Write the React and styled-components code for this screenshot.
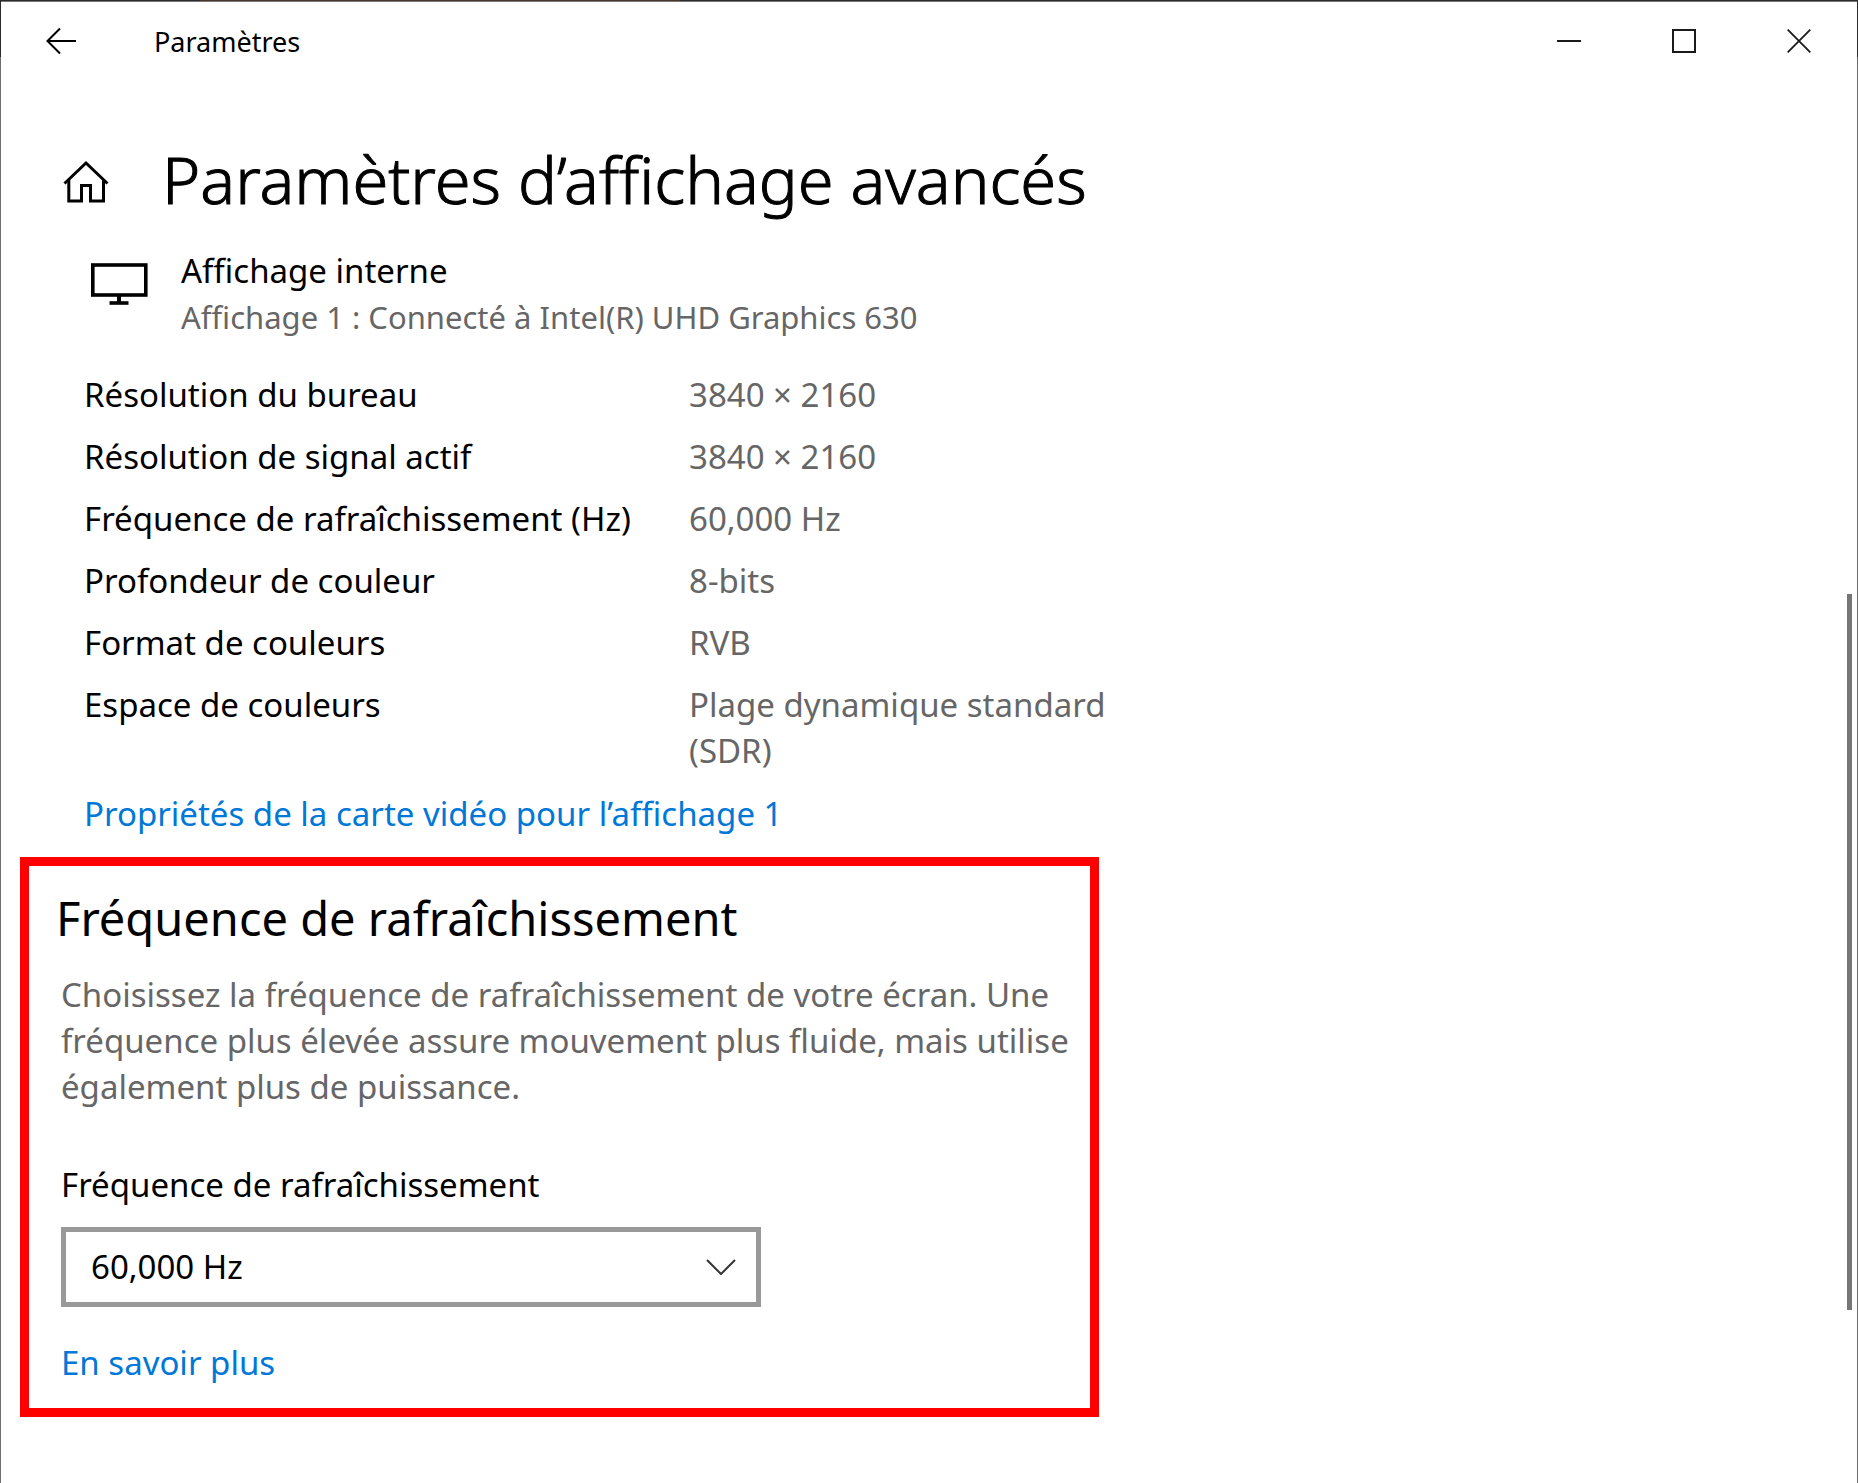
import React, { useState } from 'react';
import styled, { createGlobalStyle } from 'styled-components';

const displayInfo = [
  { label: 'Résolution du bureau', value: '3840 × 2160' },
  { label: 'Résolution de signal actif', value: '3840 × 2160' },
  { label: 'Fréquence de rafraîchissement (Hz)', value: '60,000 Hz' },
  { label: 'Profondeur de couleur', value: '8-bits' },
  { label: 'Format de couleurs', value: 'RVB' },
  { label: 'Espace de couleurs', value: 'Plage dynamique standard (SDR)' },
];

const refreshRates = ['60,000 Hz', '59,940 Hz', '48,000 Hz'];

const App = () => {
  const [rate, setRate] = useState(refreshRates[0]);

  return (
    <Desktop>
      <GlobalStyle />
      <Window>
        <TitleBar>
          <BackButton aria-label="Retour">
            <svg width="32" height="28" viewBox="0 0 32 28" fill="none" stroke="#000" strokeWidth="2">
              <path d="M2.5 14H31M15 1.5L2.5 14 15 26.5" />
            </svg>
          </BackButton>
          <WindowTitle>Paramètres</WindowTitle>
          <BarButton aria-label="Réduire">
            <svg width="24" height="24" viewBox="0 0 24 24" fill="none" stroke="#1a1a1a" strokeWidth="2">
              <path d="M0 12h24" />
            </svg>
          </BarButton>
          <BarButton aria-label="Agrandir">
            <svg width="24" height="24" viewBox="0 0 24 24" fill="none" stroke="#1a1a1a" strokeWidth="2">
              <rect x="1" y="1" width="22" height="22" />
            </svg>
          </BarButton>
          <BarButton aria-label="Fermer">
            <svg width="24" height="24" viewBox="0 0 24 24" fill="none" stroke="#1a1a1a" strokeWidth="1.8">
              <path d="M.7.7l22.6 22.6M23.3.7L.7 23.3" />
            </svg>
          </BarButton>
        </TitleBar>

        <Header>
          <HomeButton aria-label="Accueil">
            <svg width="48" height="48" viewBox="0 0 48 48" fill="none" stroke="#000" strokeWidth="3">
              <path d="M1.5 28.5L23 8l21.5 20.5" />
              <path d="M5.8 25v21h12.7V30.5h9V46h13V25" />
            </svg>
          </HomeButton>
          <PageTitle>Paramètres d’affichage avancés</PageTitle>
        </Header>

        <Content>
          <Device>
            <MonitorIcon viewBox="0 0 58 42" fill="none" stroke="#000">
              <rect x="2.8" y="2" width="53" height="30" strokeWidth="3.6" />
              <path d="M29 33v6" strokeWidth="4" />
              <path d="M19.5 40h19" strokeWidth="3.6" />
            </MonitorIcon>
            <div>
              <DeviceName>Affichage interne</DeviceName>
              <DeviceDetail>Affichage 1 : Connecté à Intel(R) UHD Graphics 630</DeviceDetail>
            </div>
          </Device>

          <InfoTable>
            <tbody>
              {displayInfo.map((item) => (
                <tr key={item.label}>
                  <InfoLabel scope="row">{item.label}</InfoLabel>
                  <InfoValue>{item.value}</InfoValue>
                </tr>
              ))}
            </tbody>
          </InfoTable>
          <AdapterLink>
            <Link href="#adapter">Propriétés de la carte vidéo pour l’affichage 1</Link>
          </AdapterLink>

          <Highlight>
            <SectionTitle>Fréquence de rafraîchissement</SectionTitle>
            <SectionBody>
              <Hint>
                Choisissez la fréquence de rafraîchissement de votre écran. Une fréquence plus
                élevée assure mouvement plus fluide, mais utilise également plus de puissance.
              </Hint>
              <FieldLabel htmlFor="rate">Fréquence de rafraîchissement</FieldLabel>
              <SelectWrap>
                <Select id="rate" value={rate} onChange={(e) => setRate(e.target.value)}>
                  {refreshRates.map((r) => (
                    <option key={r}>{r}</option>
                  ))}
                </Select>
                <Chevron viewBox="0 0 30 16" fill="none" stroke="#333" strokeWidth="2">
                  <path d="M1 1l14 14L29 1" />
                </Chevron>
              </SelectWrap>
              <Link href="#more">En savoir plus</Link>
            </SectionBody>
          </Highlight>
        </Content>
        <ScrollThumb />
      </Window>
    </Desktop>
  );
};

// Styled Components

const GlobalStyle = createGlobalStyle`
  * {
    box-sizing: border-box;
  }

  body {
    margin: 0;
    font-family: 'Noto Sans', 'Open Sans', sans-serif;
    font-size: 33px;
    line-height: 46px;
    color: #000;
  }
`;

/* a sliver of the desktop shows around the window */
const Desktop = styled.div`
  min-height: 100vh;
  padding: 1px 1px 0;
  display: flex;
  background:
    linear-gradient(#4a3830, #4a3830) 200px 0 / 480px 1px no-repeat,
    linear-gradient(#2b2b2b 57px, #6e6e6e 57px);
`;

const Window = styled.div`
  position: relative;
  flex: 1;
  min-width: 0;
  background: #fff;
  border-top: 1px solid #767676;
  border-bottom: 1px solid #6e6e6e;
`;

const TitleBar = styled.div`
  display: flex;
  height: 78px;
  padding-right: 1px;
  align-items: stretch;
`;

const BarButton = styled.button`
  width: 115px;
  padding: 0;
  border: 0;
  background: none;
  display: flex;
  align-items: center;
  justify-content: center;

  &:hover {
    background: #e5e5e5;
  }
`;

const BackButton = styled(BarButton)`
  width: 120px;
`;

const WindowTitle = styled.div`
  flex: 1;
  padding-left: 33px;
  font-size: 27px;
  line-height: 80px;
`;

const Header = styled.header`
  display: flex;
  align-items: center;
  gap: 48px;
  padding: 54px 62px 0;
`;

const HomeButton = styled.button`
  width: 48px;
  height: 48px;
  padding: 0;
  border: 0;
  background: none;
`;

/* the light cut is a little thin at this size */
const PageTitle = styled.h1`
  margin: 0;
  padding-left: 3px;
  font-size: 65px;
  font-weight: 300;
  line-height: 90px;
  -webkit-text-stroke: 1px #000;
`;

const Content = styled.main`
  max-width: 1118px;
  padding: 24px 0 66px 19px;
`;

const Device = styled.div`
  display: flex;
  gap: 33px;
  padding-left: 70px;
`;

const MonitorIcon = styled.svg`
  width: 58px;
  height: 42px;
  margin-top: 15px;
`;

const DeviceName = styled.div`
  color: #000;
`;

const DeviceDetail = styled.div`
  font-size: 31px;
  color: #666;
`;

const InfoTable = styled.table`
  width: 100%;
  margin-top: 24px;
  table-layout: fixed;
  border-collapse: collapse;
`;

const InfoLabel = styled.th`
  width: 669px;
  padding: 8px 0 8px 64px;
  font-weight: 400;
  text-align: left;
  vertical-align: top;
`;

const InfoValue = styled.td`
  padding: 8px 0;
  color: #666;
  vertical-align: top;
`;

const AdapterLink = styled.div`
  padding: 9px 0 20px 64px;
`;

const Link = styled.a`
  color: #0078d7;
  text-decoration: none;

  &:hover {
    color: #666;
  }
`;

const Highlight = styled.section`
  max-width: 1079px;
  padding: 20px 12px 22px 27px;
  border: 9px solid #ff0000;
`;

const SectionTitle = styled.h2`
  margin: 0 0 22px;
  font-size: 47px;
  font-weight: 400;
  line-height: 64px;
`;

const SectionBody = styled.div`
  padding-left: 5px;
`;

const Hint = styled.p`
  margin: 0 0 52px;
  color: #666;
`;

const FieldLabel = styled.label`
  display: block;
  margin-bottom: 19px;
`;

const SelectWrap = styled.div`
  position: relative;
  max-width: 700px;
  margin-bottom: 33px;
`;

const Select = styled.select`
  display: block;
  width: 100%;
  height: 80px;
  padding: 0 64px 0 25px;
  appearance: none;
  border: 5px solid #999;
  border-radius: 0;
  background: #fff;
  color: #000;
  font: inherit;
`;

const Chevron = styled.svg`
  position: absolute;
  top: 32px;
  right: 25px;
  width: 30px;
  height: 16px;
  pointer-events: none;
`;

const ScrollThumb = styled.div`
  position: absolute;
  top: 40%;
  right: 5px;
  width: 5px;
  height: 716px;
  background: #767676;
`;

export default App;
